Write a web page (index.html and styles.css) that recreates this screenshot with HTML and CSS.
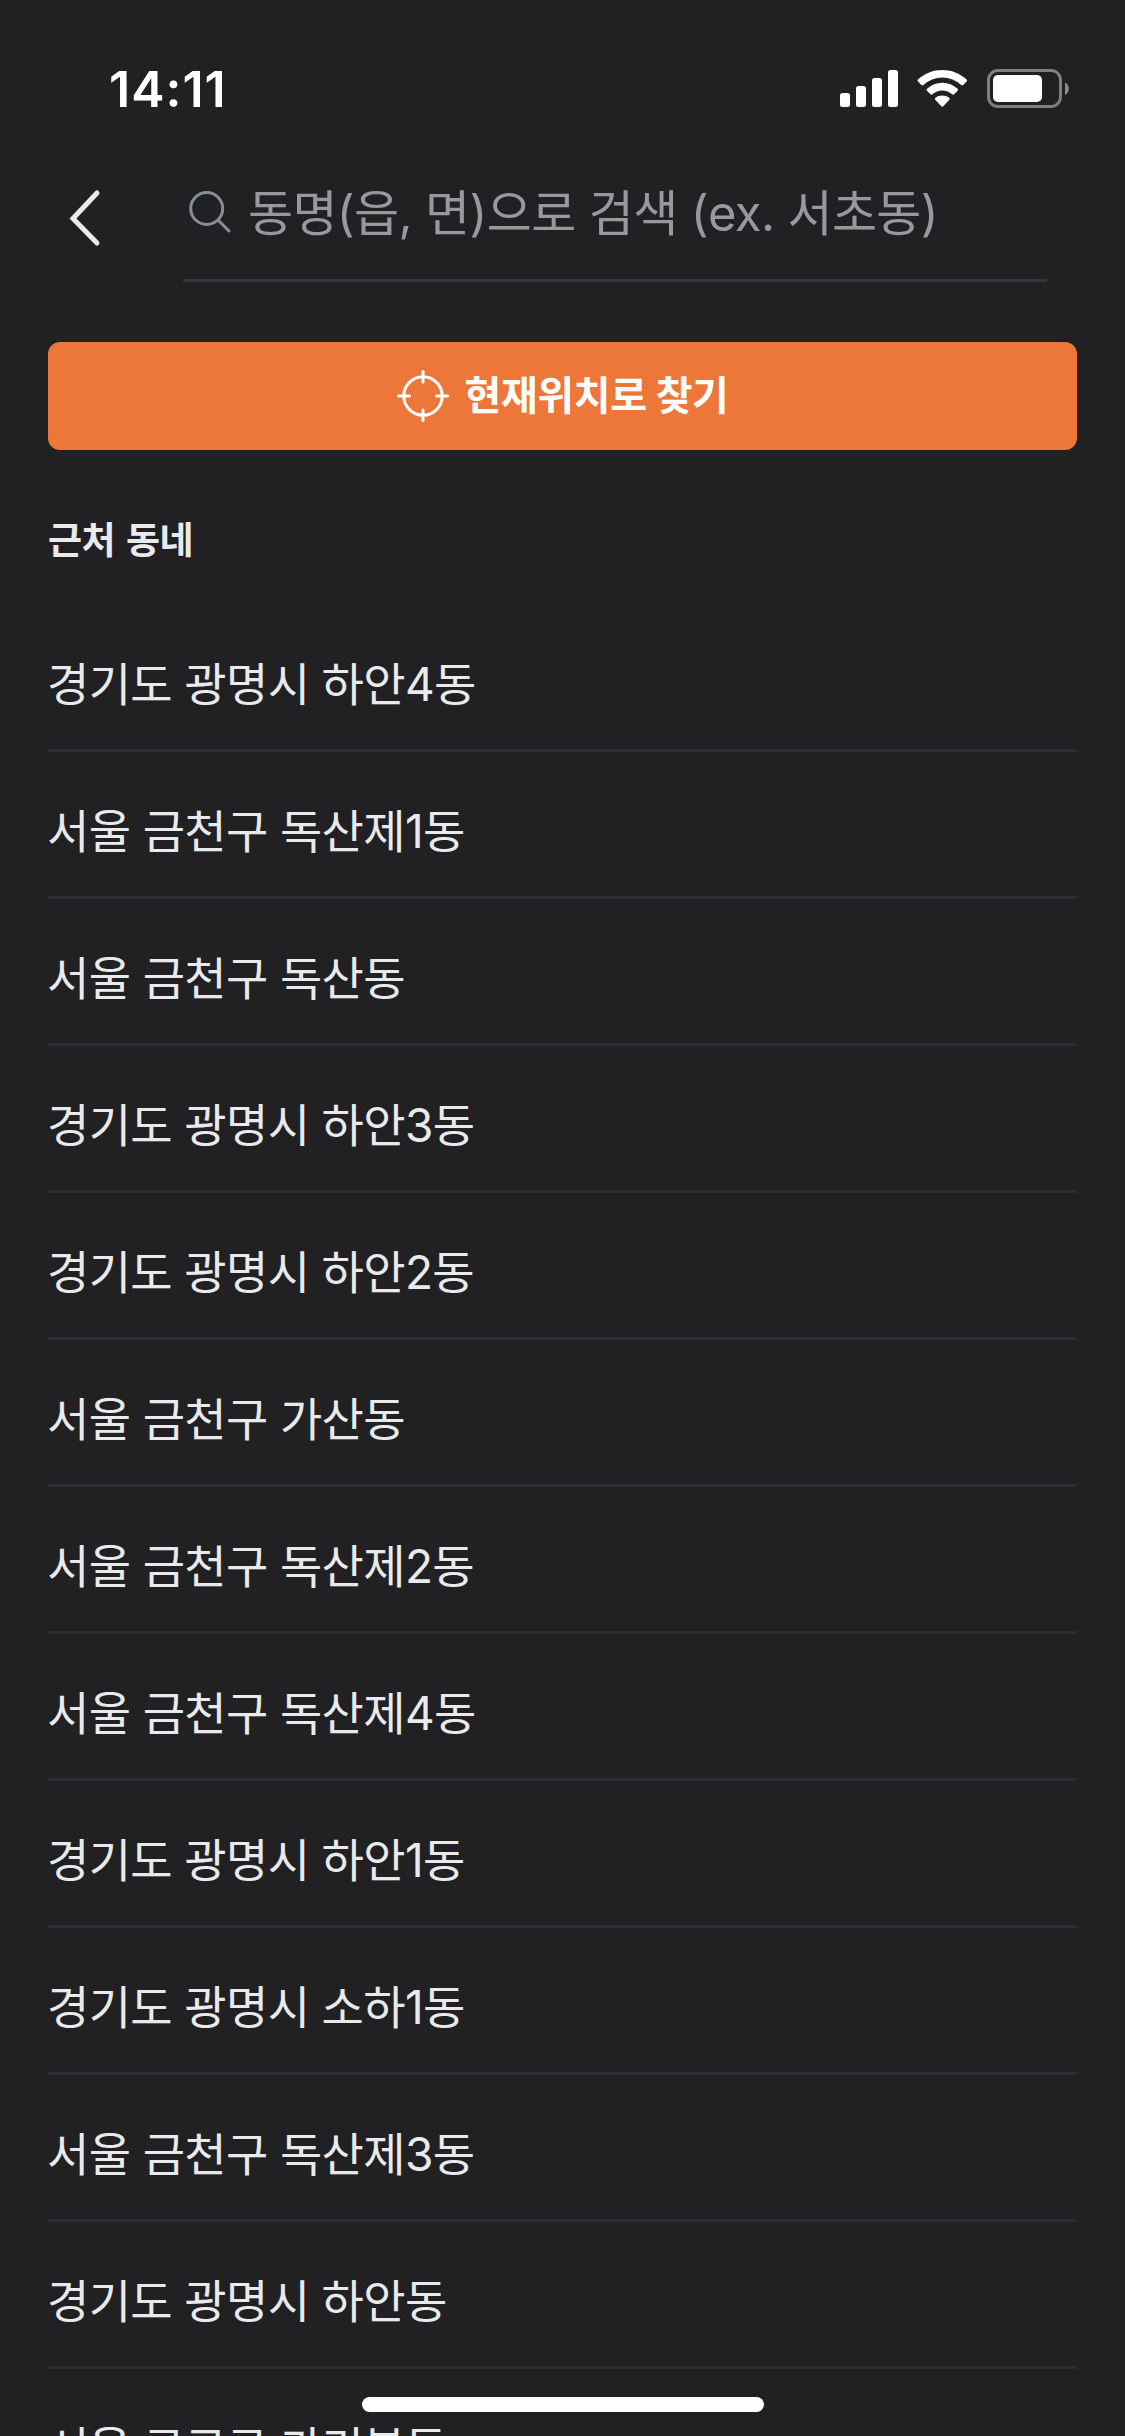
FILE: index.html
```html
<!DOCTYPE html>
<html lang="ko">
<head>
  <meta charset="UTF-8" />
  <meta name="viewport" content="width=device-width, initial-scale=1.0" />
  <title>동네 검색</title>
  <link rel="stylesheet" href="styles.css">
</head>
<body>
  <div class="screen">
    <div class="status-bar">
      <span class="time">14:11</span>
      <svg class="status-icons" width="232" height="42" viewBox="0 0 232 42">
        <g fill="#fff">
          <rect x="1" y="26" width="10" height="14" rx="2.5" />
          <rect x="17" y="19" width="10" height="21" rx="2.5" />
          <rect x="33" y="11" width="10" height="29" rx="2.5" />
          <rect x="49" y="3" width="10" height="37" rx="2.5" />
          <path d="M103.3 3c9 0 17.500 3.300 24.300 9.500.6.600.6 1.500 0 2l-3.400 3.500c-.6.600-1.400.6-2 0a27.700 27.700 0 0 0-37.800 0c-.6.600-1.400.6-2 0L79 14.500c-.6-.5-.6-1.400 0-2C85.800 6.300 94.300 3 103.300 3z" />
          <path d="M103.300 15.800c5.700 0 11 2.100 15.300 6 .6.600.6 1.400 0 2l-3.500 3.500c-.5.500-1.300.5-1.900 0a14.500 14.500 0 0 0-19.800 0c-.6.500-1.400.5-1.900 0L88 23.800c-.6-.6-.6-1.400 0-2 4.300-3.900 9.600-6 15.300-6z" />
          <path d="M103.300 28.400c2.600 0 4.900.8 6.900 2.400.6.500.6 1.400.1 2l-6 6.400c-.6.600-1.400.6-2 0l-6-6.400c-.5-.6-.5-1.500.1-2 2-1.600 4.300-2.400 6.900-2.400z" />
          <rect x="154" y="8" width="49" height="27" rx="5" />
        </g>
        <rect x="149.500" y="3.500" width="72" height="36" rx="9.500" fill="none" stroke="#7f7f81" stroke-width="3" />
        <path d="M226 15.500c5 2 5 10.500 0 12.500z" fill="#8b8b8d" />
      </svg>
    </div>

    <header class="search-header">
      <button type="button" class="back-button" aria-label="뒤로">
        <svg width="36" height="60" viewBox="0 0 36 60">
          <path d="M28 5L4 30.500L28 55" fill="none" stroke="#e9eaec" stroke-width="5" stroke-linecap="round" stroke-linejoin="miter" />
        </svg>
      </button>
      <label class="search-field">
        <svg class="search-icon" width="44" height="44" viewBox="0 0 44 44">
          <g fill="none" stroke="#868e96" stroke-width="3" stroke-linecap="round">
            <circle cx="18.700" cy="18.500" r="16" />
            <path d="M30 30L41 41" />
          </g>
        </svg>
        <span class="placeholder">동명(읍, 면)으로 검색 (ex. 서초동)</span>
      </label>
    </header>

    <main class="content">
      <button type="button" class="location-button">
        <svg width="52" height="52" viewBox="0 0 52 52">
          <g fill="none" stroke="#fff" stroke-width="3" stroke-linecap="round">
            <circle cx="26" cy="26" r="19.200" />
            <path d="M26 1.500V12M26 40V50.500M1.500 26H12.500M39.500 26H50.500" />
          </g>
        </svg>
        <span class="button-text">현재위치로 찾기</span>
      </button>

      <h1 class="list-title">근처 동네</h1>

      <ul class="town-list">
        <li>경기도 광명시 하안4동</li>
        <li>서울 금천구 독산제1동</li>
        <li>서울 금천구 독산동</li>
        <li>경기도 광명시 하안3동</li>
        <li>경기도 광명시 하안2동</li>
        <li>서울 금천구 가산동</li>
        <li>서울 금천구 독산제2동</li>
        <li>서울 금천구 독산제4동</li>
        <li>경기도 광명시 하안1동</li>
        <li>경기도 광명시 소하1동</li>
        <li>서울 금천구 독산제3동</li>
        <li>경기도 광명시 하안동</li>
        <li>서울 구로구 가리봉동</li>
      </ul>
    </main>

    <div class="home-indicator"></div>
  </div>
</body>
</html>
```
FILE: styles.css
```css
* {
  box-sizing: border-box;
}

body {
  margin: 0;
  background: #212123;
  color: #e9eaec;
  font-family: Inter, "Noto Sans CJK KR", sans-serif;
}

button {
  padding: 0;
  border: none;
  background: none;
  font-family: inherit;
  cursor: pointer;
}

svg {
  display: block;
  flex-shrink: 0;
}

.screen {
  position: relative;
  width: 1125px;
  height: 2436px;
  overflow: hidden;
}

.status-bar {
  display: flex;
  justify-content: space-between;
  height: 132px;
  padding: 67px 54px 0 109px;
}

.time {
  font-size: 50px;
  font-weight: 600;
  line-height: 44px;
  letter-spacing: 1px;
  color: #fff;
}

.search-header {
  display: flex;
  height: 150px;
  padding: 0 78px 0 69px;
}

.back-button {
  width: 114px;
  padding-top: 56px;
  display: flex;
  align-items: flex-start;
}

.search-field {
  flex: 1;
  display: flex;
  align-items: flex-start;
  padding: 58px 0 0 5px;
  border-bottom: 3px solid #33363b;
}

.placeholder {
  margin: -6px 0 0 16px;
  font-size: 49px;
  line-height: 60px;
  letter-spacing: -0.65px;
  white-space: nowrap;
  color: #98989f;
}

.content {
  padding: 60px 48px 0;
}

.location-button {
  display: flex;
  justify-content: center;
  align-items: center;
  gap: 16px;
  width: 100%;
  height: 108px;
  border-radius: 12px;
  background: #ed7738;
  color: #fff;
  font-size: 40px;
  font-weight: 700;
  letter-spacing: -0.4px;
}

.button-text {
  line-height: 60px;
}

.list-title {
  margin: 61px 0 0;
  height: 94px;
  font-size: 37px;
  font-weight: 700;
  line-height: 60px;
  letter-spacing: -0.6px;
  word-spacing: 3px;
}

.town-list {
  margin: 0;
  padding: 0;
  list-style: none;
}

.town-list li {
  height: 147px;
  padding-top: 49px;
  border-bottom: 3px solid #2c2d30;
  font-size: 46px;
  line-height: 60px;
  letter-spacing: -0.65px;
  text-indent: -1px;
}

.home-indicator {
  position: absolute;
  left: 362px;
  bottom: 24px;
  width: 402px;
  height: 15px;
  border-radius: 8px;
  background: #fff;
}
```
